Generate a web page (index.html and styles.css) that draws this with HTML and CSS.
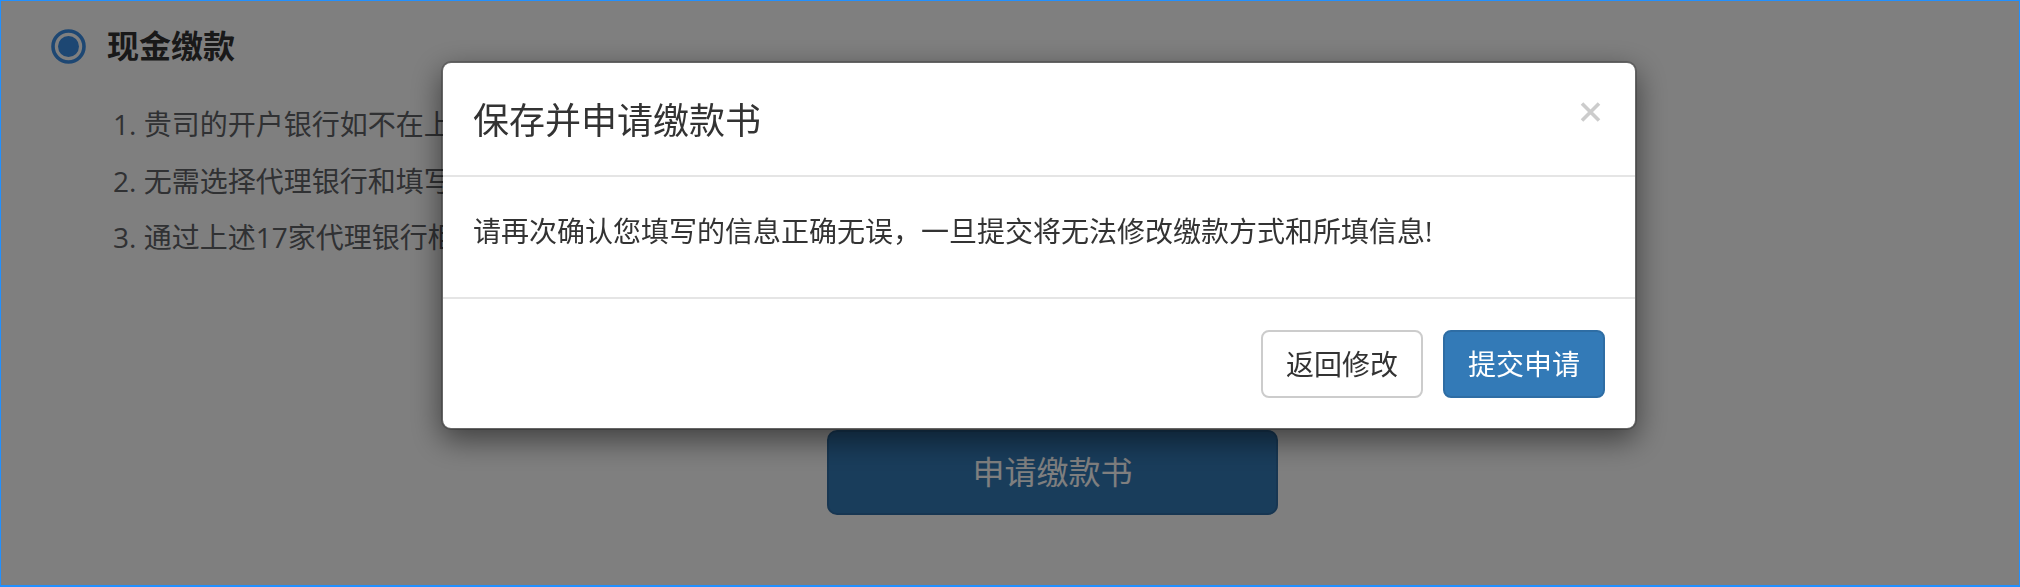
FILE: index.html
```html
<!DOCTYPE html>
<html lang="zh-CN">
<head>
<meta charset="utf-8">
<title>保存并申请缴款书</title>
<link rel="stylesheet" href="styles.css">
</head>
<body>
<div class="page">
  <div class="pay-option">
    <svg class="radio" width="35" height="35" viewBox="0 0 35 35">
      <circle cx="17.5" cy="17.5" r="15.5" fill="none" stroke="#3b8ee6" stroke-width="3.6"/>
      <circle cx="17.5" cy="17.5" r="10.5" fill="#3b8ee6"/>
    </svg>
    <span class="option-title">现金缴款</span>
  </div>
  <ol class="notes">
    <li>1. 贵司的开户银行如不在上述代理银行之列，请选择现金缴款；</li>
    <li>2. 无需选择代理银行和填写付款账户信息；</li>
    <li>3. 通过上述17家代理银行柜台以现金方式缴纳。</li>
  </ol>
  <button class="apply-btn" type="button">申请缴款书</button>
</div>

<div class="backdrop"></div>

<div class="modal">
  <div class="modal-dialog">
    <div class="modal-content">
      <div class="modal-header">
        <h4 class="modal-title">保存并申请缴款书</h4>
        <button class="close" type="button" aria-label="关闭">
          <svg width="21" height="20" viewBox="0 0 21 20">
            <path d="M2 1.5 L19 18.5 M19 1.5 L2 18.5" stroke="#cccccc" stroke-width="3.6" fill="none"/>
          </svg>
        </button>
      </div>
      <div class="modal-body">
        <p>请再次确认您填写的信息正确无误，一旦提交将无法修改缴款方式和所填信息!</p>
      </div>
      <div class="modal-footer">
        <button class="btn btn-default" type="button">返回修改</button>
        <button class="btn btn-primary" type="button">提交申请</button>
      </div>
    </div>
  </div>
</div>

<div class="frame"></div>
</body>
</html>
```

FILE: styles.css
```css
* {
  box-sizing: border-box;
}

html, body {
  margin: 0;
  padding: 0;
  width: 2020px;
  height: 587px;
  overflow: hidden;
  background: #ffffff;
  font-family: "Open Sans", "Noto Sans CJK SC", sans-serif;
  color: #333333;
}

.page {
  padding: 24px 0 0 51px;
}

.pay-option {
  display: flex;
  align-items: center;
  gap: 21px;
  height: 44px;
}

.radio {
  display: block;
  flex: none;
}

.option-title {
  font-size: 32px;
  font-weight: 700;
  line-height: 44px;
  color: #333333;
}

.notes {
  list-style: none;
  margin: 28px 0 0 62px;
  padding: 0;
  font-size: 28px;
  line-height: 56.5px;
  color: #606266;
}

.apply-btn {
  display: block;
  margin: 164px 0 0 776px;
  width: 451px;
  height: 85px;
  border: 2px solid #2e6da4;
  border-radius: 10px;
  background: #337ab7;
  color: #ffffff;
  font-family: inherit;
  font-size: 32px;
  line-height: 1;
  padding: 0;
}

.backdrop {
  position: fixed;
  inset: 0;
  background: rgba(0, 0, 0, 0.5);
}

.modal {
  position: fixed;
  inset: 0;
}

.modal-dialog {
  margin: 61px 0 0 441px;
  width: 1196px;
}

.modal-content {
  background: #ffffff;
  border: 2px solid rgba(0, 0, 0, 0.2);
  border-radius: 10px;
  box-shadow: 0 10px 30px rgba(0, 0, 0, 0.5);
  background-clip: padding-box;
}

.modal-header {
  display: flex;
  justify-content: space-between;
  align-items: flex-start;
  padding: 32px 30px 29px;
  border-bottom: 2px solid #e5e5e5;
}

.modal-title {
  margin: 0;
  font-size: 36px;
  font-weight: 400;
  line-height: 51px;
  color: #333333;
}

.close {
  margin: 7px 4px 0 0;
  padding: 0;
  border: 0;
  background: transparent;
  width: 21px;
  height: 20px;
}

.close svg {
  display: block;
}

.modal-body {
  padding: 34px 30px 30px;
}

.modal-body p {
  margin: 0 0 16px;
  font-size: 28px;
  line-height: 40px;
  color: #333333;
}

.modal-footer {
  display: flex;
  justify-content: flex-end;
  gap: 20px;
  padding: 31px 30px 30px;
  border-top: 2px solid #e5e5e5;
}

.btn {
  height: 68px;
  padding: 0 23px;
  border: 2px solid transparent;
  border-radius: 8px;
  font-family: inherit;
  font-size: 28px;
  line-height: 1;
}

.btn-default {
  background: #ffffff;
  border-color: #cccccc;
  color: #333333;
}

.btn-primary {
  background: #337ab7;
  border-color: #2e6da4;
  color: #ffffff;
}

.frame {
  position: fixed;
  inset: 0;
  border: 1px solid #2190ff;
  border-bottom-width: 2px;
  pointer-events: none;
}
```
